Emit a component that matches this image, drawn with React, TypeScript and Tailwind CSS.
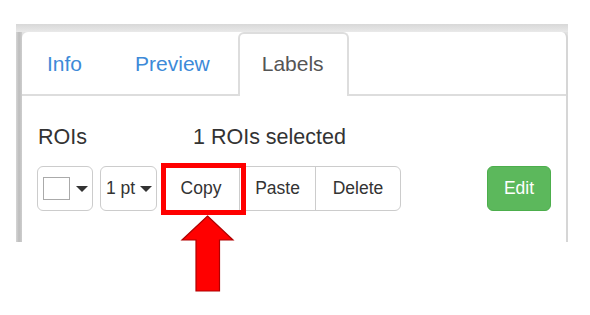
import React from "react";

function Caret() {
  return <span className="inline-block w-0 h-0 border-l-[6px] border-r-[6px] border-t-[6px] border-l-transparent border-r-transparent border-t-[#333]" />;
}

export default function App() {
  return (
    <div className="relative w-[590px] h-[315px] bg-white overflow-hidden" style={{ fontFamily: '"Liberation Sans", Arial, sans-serif' }}>
      <div className="ml-[16px] mt-[24px] w-[552px] h-[218px] flex flex-col bg-[#e2e2e2]">
        <div className="h-[8px] bg-[linear-gradient(to_bottom,#d8d8d8,#e9e9e9)]" />
        <div className="flex flex-1">
          <div className="w-[6px] bg-[linear-gradient(to_right,#d6d6d6,#bdbdbd,#cdcdcd)]" />
          <div className="flex-1 bg-white rounded-t-[6px] border-r-[2px] border-[#d6d6d6] flex flex-col">
            {/* tabs */}
            <div className="h-[64px] border-b-[2px] border-[#dddddd] flex items-center text-[21px] leading-none">
              <span className="ml-[25px] text-[#3d8ad8]">Info</span>
              <span className="ml-[53px] text-[#3d8ad8]">Preview</span>
              <div className="ml-[28px] self-end mb-[-2px] h-[64px] w-[111px] bg-white border-[2px] border-b-0 border-[#dddddd] rounded-t-[6px] flex items-center pl-[22px] pb-[3px] text-[#555555]">
                Labels
              </div>
            </div>
            {/* body */}
            <div className="flex items-center h-[28px] mt-[28px] text-[21.5px] text-[#333333] leading-none">
              <span className="ml-[16px]">ROIs</span>
              <span className="ml-[106px]">1 ROIs selected</span>
            </div>
            <div className="flex items-center mt-[14px] h-[45px] text-[17.5px] text-[#333333] leading-none">
              <div className="ml-[15px] w-[56px] h-[45px] border-[1.5px] border-[#cccccc] rounded-[6px] flex items-center pl-[5px] gap-[6px]">
                <span className="w-[27px] h-[23px] border-[1.5px] border-[#aaaaaa] bg-white" />
                <Caret />
              </div>
              <div className="ml-[7px] w-[57px] h-[45px] border-[1.5px] border-[#cccccc] rounded-[6px] flex items-center pl-[5px] gap-[5px]">
                <span>1 pt</span>
                <Caret />
              </div>
              <div className="ml-[5px] flex h-[45px] border-[1.5px] border-[#cccccc] rounded-[6px]">
                <div className="w-[77px] flex items-center justify-center border-r-[1.5px] border-[#cccccc]">Copy</div>
                <div className="w-[76px] flex items-center justify-center border-r-[1.5px] border-[#cccccc]">Paste</div>
                <div className="w-[84px] flex items-center justify-center">Delete</div>
              </div>
              <div className="ml-[86px] w-[64px] h-[45px] rounded-[6px] bg-[#5cb85c] border-[1.5px] border-[#4cae4c] text-white flex items-center justify-center">
                Edit
              </div>
            </div>
          </div>
        </div>
      </div>
      {/* highlight box */}
      <div className="absolute left-[161px] top-[163px] w-[85px] h-[52px] border-[5px] border-[#ff0000]" />
      {/* red arrow */}
      <svg className="absolute left-0 top-0" width="590" height="315" viewBox="0 0 590 315">
        <polygon points="207.5,216 233,240 219.5,240 219.5,291 196,291 196,240 182,240" fill="#ff0000" stroke="#b00000" strokeWidth="1.2" />
      </svg>
    </div>
  );
}
